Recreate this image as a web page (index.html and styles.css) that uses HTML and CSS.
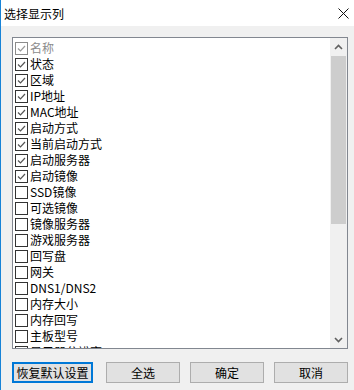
FILE: index.html
```html
<!DOCTYPE html>
<html lang="zh-CN">
<head>
<meta charset="utf-8">
<title>选择显示列</title>
<link rel="stylesheet" href="styles.css">
</head>
<body>
<div class="window">
  <div class="titlebar">
    <span class="title">选择显示列</span>
    <svg class="close" width="11" height="11" viewBox="0 0 11 11"><path d="M0.5 0.5 L10.5 10.5 M10.5 0.5 L0.5 10.5" stroke="#111" stroke-width="1" fill="none"/></svg>
  </div>
  <div class="content">
    <div class="listbox">
      <ul class="items">
        <li class="item disabled"><span class="cb"><svg viewBox="0 0 11 11"><path d="M2 5.5 L4.5 8 L9 3" /></svg></span>名称</li>
        <li class="item"><span class="cb"><svg viewBox="0 0 11 11"><path d="M2 5.5 L4.5 8 L9 3" /></svg></span>状态</li>
        <li class="item"><span class="cb"><svg viewBox="0 0 11 11"><path d="M2 5.5 L4.5 8 L9 3" /></svg></span>区域</li>
        <li class="item"><span class="cb"><svg viewBox="0 0 11 11"><path d="M2 5.5 L4.5 8 L9 3" /></svg></span>IP地址</li>
        <li class="item"><span class="cb"><svg viewBox="0 0 11 11"><path d="M2 5.5 L4.5 8 L9 3" /></svg></span>MAC地址</li>
        <li class="item"><span class="cb"><svg viewBox="0 0 11 11"><path d="M2 5.5 L4.5 8 L9 3" /></svg></span>启动方式</li>
        <li class="item"><span class="cb"><svg viewBox="0 0 11 11"><path d="M2 5.5 L4.5 8 L9 3" /></svg></span>当前启动方式</li>
        <li class="item"><span class="cb"><svg viewBox="0 0 11 11"><path d="M2 5.5 L4.5 8 L9 3" /></svg></span>启动服务器</li>
        <li class="item"><span class="cb"><svg viewBox="0 0 11 11"><path d="M2 5.5 L4.5 8 L9 3" /></svg></span>启动镜像</li>
        <li class="item"><span class="cb"></span>SSD镜像</li>
        <li class="item"><span class="cb"></span>可选镜像</li>
        <li class="item"><span class="cb"></span>镜像服务器</li>
        <li class="item"><span class="cb"></span>游戏服务器</li>
        <li class="item"><span class="cb"></span>回写盘</li>
        <li class="item"><span class="cb"></span>网关</li>
        <li class="item"><span class="cb"></span>DNS1/DNS2</li>
        <li class="item"><span class="cb"></span>内存大小</li>
        <li class="item"><span class="cb"></span>内存回写</li>
        <li class="item"><span class="cb"></span>主板型号</li>
        <li class="item"><span class="cb"></span>显示器分辨率</li>
      </ul>
      <div class="scrollbar">
        <div class="sb-btn"><svg width="9" height="6" viewBox="0 0 9 6"><path d="M1 5 L4.5 1.5 L8 5" stroke="#606060" stroke-width="1.6" fill="none"/></svg></div>
        <div class="sb-track"><div class="thumb"></div></div>
        <div class="sb-btn"><svg width="9" height="6" viewBox="0 0 9 6"><path d="M1 1 L4.5 4.5 L8 1" stroke="#606060" stroke-width="1.6" fill="none"/></svg></div>
      </div>
    </div>
    <div class="buttons">
      <button class="btn btn-default">恢复默认设置</button>
      <button class="btn">全选</button>
      <button class="btn">确定</button>
      <button class="btn">取消</button>
    </div>
  </div>
</div>
</body>
</html>
```

FILE: styles.css
```css
* { box-sizing: border-box; }
html, body {
  margin: 0;
  padding: 0;
  width: 354px;
  height: 390px;
  overflow: hidden;
  background: #f0f0f0;
  font-family: "Noto Sans CJK SC", "Liberation Sans", sans-serif;
  font-size: 12px;
  color: #000;
}
.window {
  width: 354px;
  height: 390px;
  border-left: 1px solid #1883d7;
  background: #f0f0f0;
  display: flex;
  flex-direction: column;
}
.titlebar {
  height: 26px;
  background: #fff;
  display: flex;
  align-items: center;
  justify-content: space-between;
  padding: 1px 5px 0 3px;
}
.title {
  font-size: 12px;
  line-height: 16px;
  color: #000;
}
.close {
  display: block;
  margin-top: -1px;
}
.content {
  padding: 11px 0 0 11px;
}
.listbox {
  width: 336px;
  height: 312px;
  border: 1px solid #828790;
  background: #fff;
  display: flex;
  overflow: hidden;
}
.items {
  list-style: none;
  margin: 0;
  padding: 2px 0 0 2px;
  flex: 1;
  overflow: hidden;
}
.item {
  height: 16px;
  line-height: 16px;
  display: flex;
  align-items: center;
  white-space: nowrap;
}
.cb {
  width: 13px;
  height: 13px;
  border: 1px solid #333;
  background: #fff;
  margin-right: 2px;
  flex: none;
  display: flex;
  align-items: center;
  justify-content: center;
}
.cb svg {
  width: 11px;
  height: 11px;
  display: block;
}
.cb path {
  fill: none;
  stroke: #555;
  stroke-width: 1.2;
}
.item.disabled { color: #8c8c8c; }
.item.disabled .cb { border-color: #8c8c8c; }
.item.disabled .cb path { stroke: #9a9a9a; }
.scrollbar {
  width: 17px;
  flex: none;
  background: #f0f0f0;
  display: flex;
  flex-direction: column;
}
.sb-btn {
  height: 17px;
  display: flex;
  align-items: center;
  justify-content: center;
  flex: none;
}
.sb-track {
  flex: 1;
  padding: 1px 1px 0 1px;
}
.thumb {
  height: 168px;
  background: #cdcdcd;
}
.buttons {
  display: flex;
  margin-top: 13px;
  gap: 10px;
}
.btn {
  height: 21px;
  width: 74px;
  background: #e1e1e1;
  border: 1px solid #adadad;
  font-family: "Noto Sans CJK SC", sans-serif;
  font-size: 12px;
  line-height: 16px;
  color: #000;
  padding: 0;
  margin: 0;
  border-radius: 0;
}
.btn-default {
  width: 81px;
  border: 2px solid #0078d7;
  margin-right: 3px;
  white-space: nowrap;
  overflow: visible;
}
```
